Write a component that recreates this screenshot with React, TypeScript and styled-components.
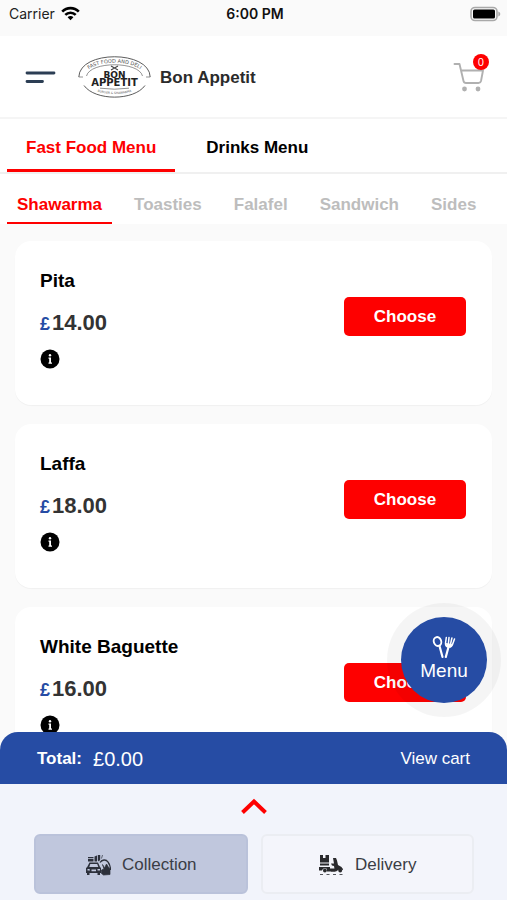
import React, { useState } from "react";
import styled, { createGlobalStyle } from "styled-components";

const RED = "#fe0000";
const BLUE = "#264ca4";
const SANS = '"Liberation Sans", Arial, Helvetica, sans-serif';
const SYSTEM = 'Inter, "Liberation Sans", sans-serif';

const GlobalStyle = createGlobalStyle`
  * { box-sizing: border-box; }
  body { margin: 0; font-family: ${SANS}; background: #fafafa; color: #000; }
  button { font-family: inherit; border: 0; background: none; padding: 0; cursor: pointer; }
  h1, h2, p, ul { margin: 0; padding: 0; }
`;

const Screen = styled.div`
  position: relative;
  display: flex;
  flex-direction: column;
  height: 100vh;
  overflow: hidden;
`;

const StatusBar = styled.div`
  display: grid;
  grid-template-columns: 1fr auto 1fr;
  align-items: center;
  height: 36px;
  padding: 0 6px 9px 9px;
  font: 400 14px/20px ${SYSTEM};
  color: #222;
`;

const Carrier = styled.div`
  display: flex;
  align-items: center;
  gap: 6px;
`;

const Clock = styled.time`
  font-weight: 600;
  color: #111;
`;

const Battery = styled.svg`
  justify-self: end;
`;

const Header = styled.header`
  display: flex;
  align-items: center;
  height: 83px;
  padding: 0 17px 0 25px;
  background: #fff;
  border-bottom: 2px solid #f5f5f5;
`;

const IconButton = styled.button`
  display: flex;
`;

const Brand = styled.div`
  display: flex;
  align-items: center;
  flex: 1;
  gap: 9px;
  margin-left: 22px;
`;

const BrandName = styled.h1`
  padding-top: 2px;
  font-size: 17px;
  line-height: 24px;
  color: #2b2b2b;
`;

const CartButton = styled.button`
  position: relative;
  display: flex;
`;

const CartBadge = styled.span`
  position: absolute;
  top: -8px;
  right: 1px;
  width: 16px;
  height: 16px;
  border-radius: 50%;
  background: ${RED};
  color: #fff;
  font: 400 10px/17px ${SYSTEM};
  text-align: center;
`;

const TabStrip = styled.nav<{ $divided?: boolean }>`
  display: flex;
  flex-shrink: 0;
  gap: 12px;
  height: ${(p) => (p.$divided ? 55 : 50)}px;
  padding-left: 7px;
  background: #fff;
  overflow: hidden;
  border-bottom: ${(p) => (p.$divided ? "2px solid #f0f0f0" : "0")};
`;

const Tab = styled.button<{ $active: boolean; $wide?: boolean; $muted?: boolean }>`
  flex-shrink: 0;
  padding: ${(p) => (p.$wide ? "8px 19px 0" : "14px 10px 0")};
  border-bottom: ${(p) => (p.$wide ? 3 : 2)}px solid ${(p) => (p.$active ? RED : "transparent")};
  font-size: 17px;
  line-height: 20px;
  font-weight: 700;
  color: ${(p) => (p.$active ? RED : p.$muted ? "#bdbdbd" : "#000")};
`;

const MenuList = styled.ul`
  display: flex;
  flex-direction: column;
  flex: 1;
  gap: 19px;
  min-height: 0;
  padding: 17px 15px 32px;
  overflow-y: auto;
  scrollbar-width: none;
  list-style: none;
`;

const Card = styled.li`
  display: flex;
  flex-shrink: 0;
  align-items: flex-start;
  justify-content: space-between;
  min-height: 164px;
  padding: 28px 26px 28px 25px;
  border-radius: 16px;
  background: #fff;
  box-shadow: 0 1px 1px rgba(0, 0, 0, 0.04);
`;

const ItemName = styled.h2`
  font-size: 19px;
  line-height: 24px;
`;

const Price = styled.p`
  margin: 18px 0 13px;
  font-size: 22px;
  line-height: 24px;
  font-weight: 700;
  color: #333;
`;

const Currency = styled.span`
  font-size: 18px;
  color: ${BLUE};
  margin-right: 2px;
`;

const ChooseButton = styled.button`
  width: 122px;
  height: 39px;
  margin-top: 28px;
  border-radius: 5px;
  background: ${RED};
  color: #fff;
  font-size: 17px;
  font-weight: 700;
`;

const MenuFab = styled.button`
  position: absolute;
  right: 6px;
  bottom: 183px;
  display: flex;
  flex-direction: column;
  align-items: center;
  justify-content: center;
  width: 114px;
  height: 114px;
  padding-bottom: 2px;
  border: 14px solid rgba(0, 0, 0, 0.04);
  border-radius: 50%;
  background: ${BLUE};
  background-clip: padding-box;
  color: #fff;
  font-size: 19px;
  line-height: 24px;
`;

const Dock = styled.footer`
  position: relative;
  flex-shrink: 0;
  margin-top: -18px;
`;

const TotalBar = styled.div`
  display: flex;
  align-items: center;
  height: 52px;
  padding: 2px 37px 0;
  border-radius: 18px 18px 0 0;
  background: ${BLUE};
  color: #fff;
  line-height: 24px;
`;

const TotalLabel = styled.span`
  font-size: 17px;
  font-weight: 700;
`;

const TotalAmount = styled.span`
  flex: 1;
  margin-left: 11px;
  font-size: 20px;
`;

const ViewCart = styled.a`
  color: inherit;
  font-size: 17px;
  text-decoration: none;
`;

const OrderPanel = styled.div`
  padding: 0 33px 6px 34px;
  background: #f2f4fb;
`;

const Expand = styled.button`
  display: flex;
  align-items: center;
  justify-content: center;
  width: 100%;
  height: 50px;
  padding-bottom: 6px;
`;

const OrderTypes = styled.div`
  display: grid;
  grid-template-columns: 1fr 1fr;
  gap: 13px;
`;

const OrderType = styled.button<{ $selected: boolean }>`
  display: flex;
  align-items: center;
  justify-content: center;
  gap: 11px;
  height: 60px;
  padding-top: 2px;
  border: 2px solid ${(p) => (p.$selected ? "#bac2da" : "#ebedf2")};
  border-radius: 6px;
  background: ${(p) => (p.$selected ? "#c0c7dd" : "#f4f5fb")};
  color: #3a3d45;
  font-size: 17px;
`;

const WifiIcon = () => (
  <svg width="19" height="15" viewBox="0 0 19 15" fill="none" stroke="#000" strokeWidth="2.6">
    <path d="M1.2 5.6C5.8.9 13.2.9 17.8 5.6" />
    <path d="M4.3 8.9C7.2 6 11.8 6 14.7 8.9" />
    <path d="M9.5 14.2 6.6 11.2C8.2 9.7 10.8 9.7 12.4 11.2Z" fill="#000" stroke="none" />
  </svg>
);

const BatteryIcon = () => (
  <Battery width="31" height="16" viewBox="0 0 31 16" role="img" aria-label="Battery full">
    <rect x="1" y="1.5" width="26" height="13" rx="4" fill="#fafafa" stroke="#a9a9a9" strokeWidth="1.6" />
    <rect x="3" y="3.5" width="22" height="9" rx="1.6" fill="#000" />
    <path d="M28.3 5.5c2.6.8 2.6 4.2 0 5z" fill="#a9a9a9" />
  </Battery>
);

const BurgerIcon = () => (
  <svg width="31" height="14" viewBox="0 0 31 14" stroke="#2c3e54" strokeWidth="2.8" strokeLinecap="round">
    <path d="M2 3h27M2 11.5h15.5" />
  </svg>
);

const Logo = () => (
  <svg width="73" height="42" viewBox="0 0 73 42" role="img" aria-label="Bon Appetit logo">
    <defs>
      <path id="logo-top" d="M5 22C8 1.5 65 1.5 68 22" />
      <path id="logo-bottom" d="M15 34.5Q36.5 41.5 58 34.5" />
    </defs>
    <g fill="none" stroke="#4a4a4a">
      <path d="M.8 21C1.5-6 71.5-6 72.2 21" strokeWidth="0.9" />
      <path d="M8.5 20C12 5 61 5 64.5 20" strokeWidth="0.6" />
      <path d="M6 29.5C17 45 56 45 67 29.5" strokeWidth="0.9" />
      <path d="M.8 21H5M68 21h4.2M22 32.2q14.5 2 29 0" strokeWidth="0.6" />
    </g>
    <path d="M33 10l7 4M40 10l-7 4" stroke="#444" strokeWidth="1.1" />
    <g fill="#555" fontFamily='"DejaVu Sans", sans-serif' textAnchor="middle">
      <text fontSize="5">
        <textPath href="#logo-top" startOffset="50%">FAST FOOD AND DELI</textPath>
      </text>
      <text fontSize="3">
        <textPath href="#logo-bottom" startOffset="50%">BURGER &amp; SHAWARMA</textPath>
      </text>
    </g>
    <g fill="#222" fontFamily='"DejaVu Sans", sans-serif' fontWeight="700" textAnchor="middle">
      <text x="36.5" y="21.5" fontSize="9">BON</text>
      <text x="36.5" y="30" fontSize="10">APPETIT</text>
    </g>
  </svg>
);

const CartIcon = () => (
  <svg width="37" height="30" viewBox="0 0 37 30" fill="none" stroke="#b0b0b0" strokeWidth="1.9" strokeLinecap="round" strokeLinejoin="round">
    <path d="M1.5 2H6.5L10.5 19Q11 21 13 21H25.5Q27.500 21 28 19L30 8.500H8" />
    <circle cx="11.5" cy="27" r="2.4" fill="#b0b0b0" stroke="none" />
    <circle cx="25" cy="27" r="2.4" fill="#b0b0b0" stroke="none" />
  </svg>
);

const InfoIcon = () => (
  <svg width="20" height="20" viewBox="0 0 20 20">
    <circle cx="10" cy="10" r="9.5" fill="#000" />
    <circle cx="10" cy="6.2" r="1.2" fill="#fff" />
    <path d="M8.5 8.600H11v5h1v1.200H8.500v-1.200h.7V9.800h-.7z" fill="#fff" />
  </svg>
);

const CutleryIcon = () => (
  <svg width="24" height="24" viewBox="0 0 24 24" fill="none" stroke="#fff" strokeLinecap="round" strokeLinejoin="round">
    <ellipse cx="5.500" cy="6.500" rx="3.700" ry="4.500" transform="rotate(-20 5.500 6.500)" strokeWidth="1.900" />
    <path d="M7.500 11 10.500 22M16.500 12 13.800 22" strokeWidth="2.200" />
    <path d="M14.300 2.500 13.500 8Q13.300 11.500 16.200 12 19.500 12.500 20.500 9.500L22.500 4M17 2.500 16.300 9.500M19.900 3 18.300 10" strokeWidth="1.500" />
    <path d="M14 8.500 20.500 9.500 18.500 12 15 11.500Z" fill="#fff" strokeWidth="0.800" />
  </svg>
);

const ChevronUp = () => (
  <svg width="28" height="17" viewBox="0 0 28 17" fill="none" stroke={RED} strokeWidth="4">
    <path d="M2.500 14.500 14 3.500 25.500 14.500" />
  </svg>
);

const CollectionIcon = () => (
  <svg width="26" height="22" viewBox="0 0 26 22" fill="#2c303b">
    <path d="M3 3h5.500v1.200H3zM3 5h5.500v2.500H3zM9.500 2.500 12 1.500v6H9.500zM12.800 1h2.400v4.500l-1.200 2-1.200-1z" />
    <path fillRule="evenodd" d="M4.500 8.500h8.500l2 4.500 1 1v5h-1v2h-2.500v-2H4.500v2H2v-2H1v-5l1.200-1zM5.300 10l-1 3h9l-1.100-3zM2.500 15v1.500h2.500L4.500 15zM12.500 15v1.500H15V15zM6.500 15.500v1.800h4.500v-1.800z" />
    <path d="M15 8.500c2-3 6-3.500 8-.5 2 2.500 2.500 5 2.500 8" fill="none" stroke="#2c303b" strokeWidth="1.300" />
    <path d="M16.500 4.500 17.500 1M17.500 10.500l2 3.500 2-4 1.500 2.500L25 15v5.500l-6.500.5-2-1.500v-3.500l2.500-1z" stroke="#2c303b" strokeWidth="0.700" />
  </svg>
);

const DeliveryIcon = () => (
  <svg width="26" height="22" viewBox="0 0 26 22" fill="#2a2a2d">
    <path d="M2 1h3v3h2.500V1H11v7.500H2zM2 9.500h9v2H2zM1 13h11v3.500H9.800A3 3 0 0 0 4 16.500H1z" />
    <path d="M15 4h3l1 2.500 1 4.500 3.500 2 1.500 2.500h-4L18 17.500h-5V15h3.500l-.5-3-2-.5-1-2h3z" />
    <path d="M9 14.500h8v3H9z" />
    <circle cx="6.900" cy="16.500" r="1.900" />
    <circle cx="22.200" cy="16.500" r="1.900" />
    <path d="M19.500 15.500q2.500-3 5.500 0" fill="none" stroke="#2a2a2d" />
    <path d="M2 20.500h3M8.500 20.500h3M15 20.500h3M21.500 20.500h3" stroke="#55575d" strokeWidth="1.100" />
  </svg>
);

const MENUS = ["Fast Food Menu", "Drinks Menu"];
const CATEGORIES = ["Shawarma", "Toasties", "Falafel", "Sandwich", "Sides"];
const ITEMS = [
  { name: "Pita", price: "14.00" },
  { name: "Laffa", price: "18.00" },
  { name: "White Baguette", price: "16.00" },
];
const ORDER_TYPES = [
  { name: "Collection", Icon: CollectionIcon },
  { name: "Delivery", Icon: DeliveryIcon },
];

export default function App() {
  const [menu, setMenu] = useState(MENUS[0]);
  const [category, setCategory] = useState(CATEGORIES[0]);
  const [orderType, setOrderType] = useState("Collection");

  return (
    <Screen>
      <GlobalStyle />
      <StatusBar>
        <Carrier>
          Carrier
          <WifiIcon />
        </Carrier>
        <Clock>6:00 PM</Clock>
        <BatteryIcon />
      </StatusBar>
      <Header>
        <IconButton aria-label="Open navigation">
          <BurgerIcon />
        </IconButton>
        <Brand>
          <Logo />
          <BrandName>Bon Appetit</BrandName>
        </Brand>
        <CartButton aria-label="Cart">
          <CartIcon />
          <CartBadge>0</CartBadge>
        </CartButton>
      </Header>
      <TabStrip $divided aria-label="Menus">
        {MENUS.map((name) => (
          <Tab key={name} $wide $active={menu === name} onClick={() => setMenu(name)}>
            {name}
          </Tab>
        ))}
      </TabStrip>
      <TabStrip aria-label="Categories">
        {CATEGORIES.map((name) => (
          <Tab key={name} $muted $active={category === name} onClick={() => setCategory(name)}>
            {name}
          </Tab>
        ))}
      </TabStrip>
      <MenuList>
        {ITEMS.map((item) => (
          <Card key={item.name}>
            <div>
              <ItemName>{item.name}</ItemName>
              <Price>
                <Currency>£</Currency>
                {item.price}
              </Price>
              <IconButton aria-label={`About ${item.name}`}>
                <InfoIcon />
              </IconButton>
            </div>
            <ChooseButton>Choose</ChooseButton>
          </Card>
        ))}
      </MenuList>
      <Dock>
        <TotalBar>
          <TotalLabel>Total:</TotalLabel>
          <TotalAmount>£0.00</TotalAmount>
          <ViewCart href="#cart">View cart</ViewCart>
        </TotalBar>
        <OrderPanel>
          <Expand aria-label="Show order options">
            <ChevronUp />
          </Expand>
          <OrderTypes>
            {ORDER_TYPES.map(({ name, Icon }) => (
              <OrderType
                key={name}
                $selected={orderType === name}
                aria-pressed={orderType === name}
                onClick={() => setOrderType(name)}
              >
                <Icon />
                {name}
              </OrderType>
            ))}
          </OrderTypes>
        </OrderPanel>
      </Dock>
      <MenuFab>
        <CutleryIcon />
        Menu
      </MenuFab>
    </Screen>
  );
}
